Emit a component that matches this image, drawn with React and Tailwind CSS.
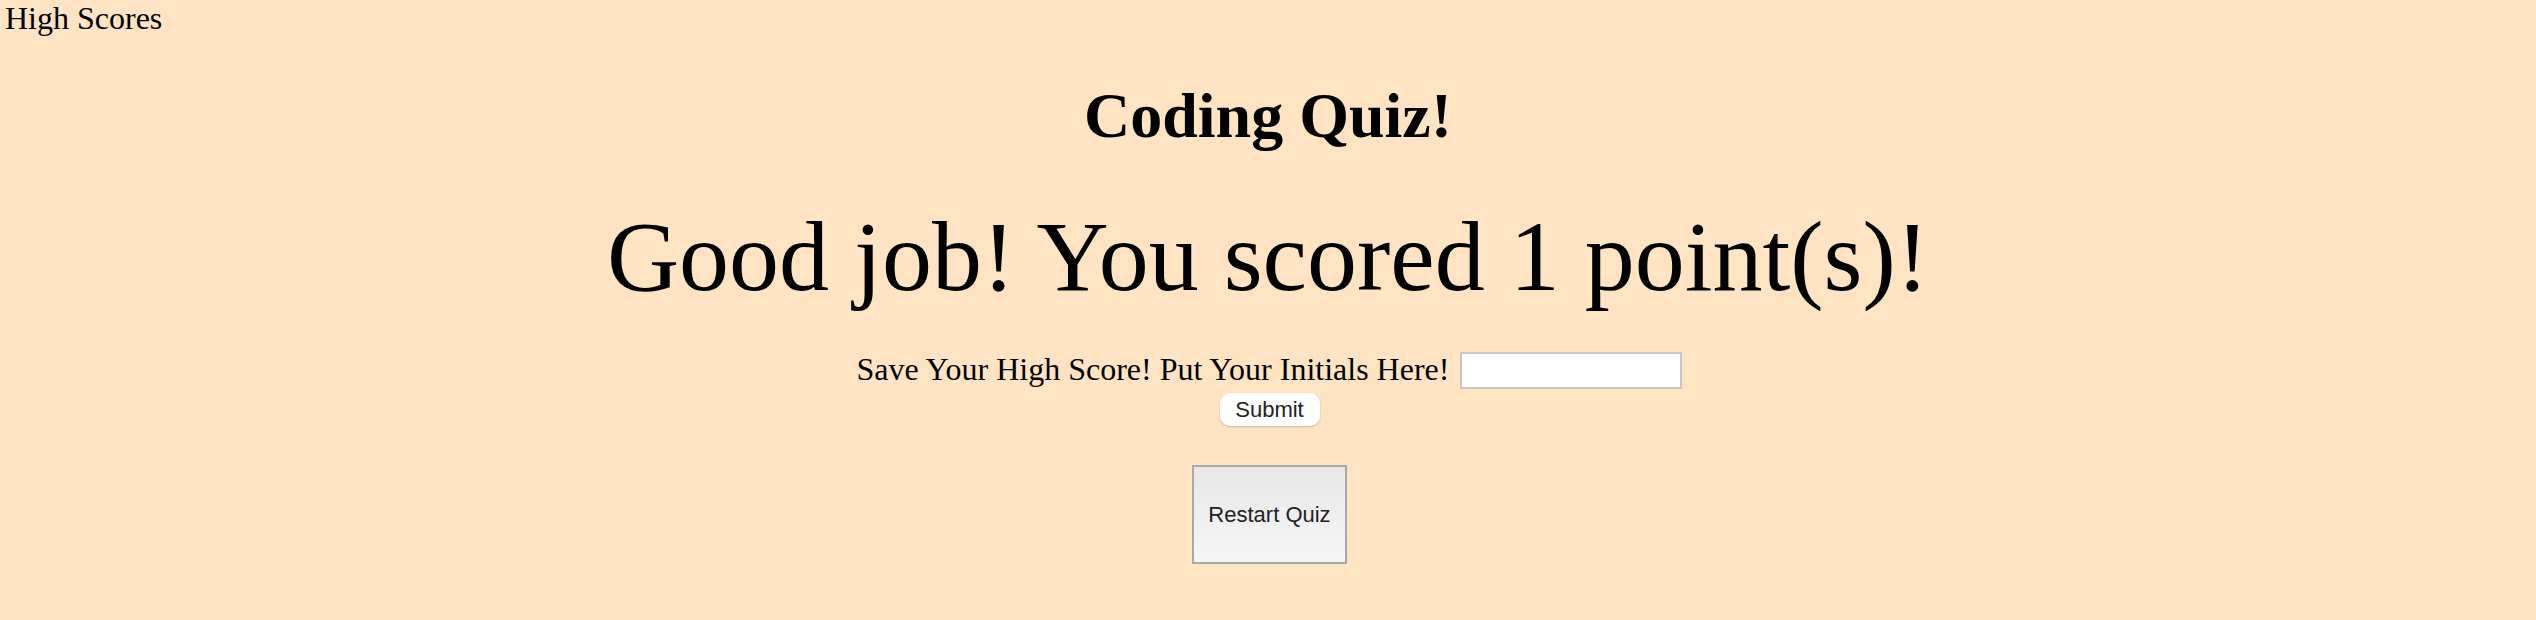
import React from "react";

const App = () => {
  return (
    <div
      className="min-h-[620px] bg-[#ffe4c4] text-black"
      style={{ fontFamily: '"Liberation Serif", "Times New Roman", serif' }}
    >
      {/* Header */}
      <div className="pl-[5px] text-[32px] leading-[37px]">High Scores</div>

      <h1 className="mt-[42px] text-center text-[64px] font-bold leading-[74px]">
        Coding Quiz!
      </h1>

      <div className="mt-[46px] text-center text-[100px] leading-[115px]">
        Good job! You scored 1 point(s)!
      </div>

      {/* Save score form */}
      <div className="mt-[37px] flex flex-col items-center">
        <div className="flex h-[37px] items-center justify-center gap-[11px] pl-[3px]">
          <span className="text-[32px] leading-[37px]">
            Save Your High Score! Put Your Initials Here!
          </span>
          <input
            type="text"
            className="mt-[2px] h-[37px] w-[222px] border-2 border-[#c6c6c6] bg-white outline-none"
          />
        </div>
        <button
          className="mt-[5px] ml-[3px] flex h-[33px] w-[100px] items-center justify-center rounded-[10px] bg-white text-[22px] text-[#222] shadow-[0_1px_2px_rgba(120,80,40,0.35)]"
          style={{ fontFamily: '"Liberation Sans", Arial, sans-serif' }}
        >
          Submit
        </button>
        <button
          className="mt-[39px] ml-[3px] flex h-[99px] w-[155px] items-center justify-center border-2 border-[#a9a9a9] bg-gradient-to-b from-[#e7e7e7] to-[#f6f6f6] text-[22px] text-[#222]"
          style={{ fontFamily: '"Liberation Sans", Arial, sans-serif' }}
        >
          Restart Quiz
        </button>
      </div>
    </div>
  );
};

export default App;
